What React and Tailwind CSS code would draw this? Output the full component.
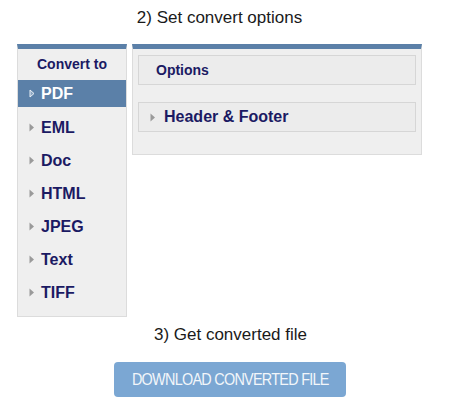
import React from 'react';

const Arrow = ({ active }) => (
    <svg width="6" height="9" viewBox="0 0 6 9" className="shrink-0">
        {active ? (
            <path d="M1 1 L5 4.5 L1 8 Z" fill="#8aa5c2" stroke="#e8eef5" strokeWidth="1" />
        ) : (
            <path d="M0.5 0.5 L5 4.5 L0.5 8.5 Z" fill="#9a9a9a" />
        )}
    </svg>
);

const formats = ['PDF', 'EML', 'Doc', 'HTML', 'JPEG', 'Text', 'TIFF'];

const App = () => {
    return (
        <div className="w-[474px] h-[412px] bg-white font-['Liberation_Sans',Arial,sans-serif] text-[#222]">
            <div className="pt-[8px] pr-[35px] text-center text-[17px] leading-[20px] text-[#1a1a1a]">
                2) Set convert options
            </div>

            <div className="flex items-start gap-[5px] pl-[17px] mt-[16px]">
                <div className="w-[110px] bg-[#efefef] border-t-[5px] border-t-[#5b80a8] border-x border-b border-[#dcdcdc] pb-[10px]">
                    <div className="h-[31px] flex items-center justify-center text-[14px] font-bold text-[#1b1a63]">
                        Convert to
                    </div>
                    <div className="flex flex-col gap-[6px]">
                        {formats.map((f, i) => (
                            <div
                                key={f}
                                className={`h-[27px] flex items-center gap-[6px] pl-[11px] text-[16px] font-bold ${
                                    i === 0 ? 'bg-[#5b80a8] text-white mb-[1px]' : 'text-[#1b1a63]'
                                }`}
                            >
                                <Arrow active={i === 0} />
                                <span>{f}</span>
                            </div>
                        ))}
                    </div>
                </div>

                <div className="w-[290px] bg-[#efefef] border-t-[5px] border-t-[#5b80a8] border-x border-b border-[#dcdcdc] px-[5px] pt-[6px] pb-[22px]">
                    <div className="h-[30px] flex items-center pl-[17px] bg-[#ececec] border border-[#d6d6d6] text-[14px] font-bold text-[#1b1a63]">
                        Options
                    </div>
                    <div className="h-[30px] mt-[17px] flex items-center gap-[8px] pl-[11px] bg-[#ececec] border border-[#d6d6d6] text-[16px] font-bold text-[#1b1a63]">
                        <Arrow />
                        <span>Header &amp; Footer</span>
                    </div>
                </div>
            </div>

            <div className="mt-[8px] pr-[13px] text-center text-[17px] leading-[20px] text-[#1a1a1a]">
                3) Get converted file
            </div>

            <div className="flex pl-[114px] mt-[17px]">
                <button className="w-[232px] h-[35px] rounded-[4px] bg-[#7ba7d3] text-[#f2f6fa] flex items-center justify-center">
                    <span className="inline-block text-[16px] tracking-[-0.8px] scale-x-[0.9] whitespace-nowrap">
                        DOWNLOAD CONVERTED FILE
                    </span>
                </button>
            </div>
        </div>
    );
};

export default App;
